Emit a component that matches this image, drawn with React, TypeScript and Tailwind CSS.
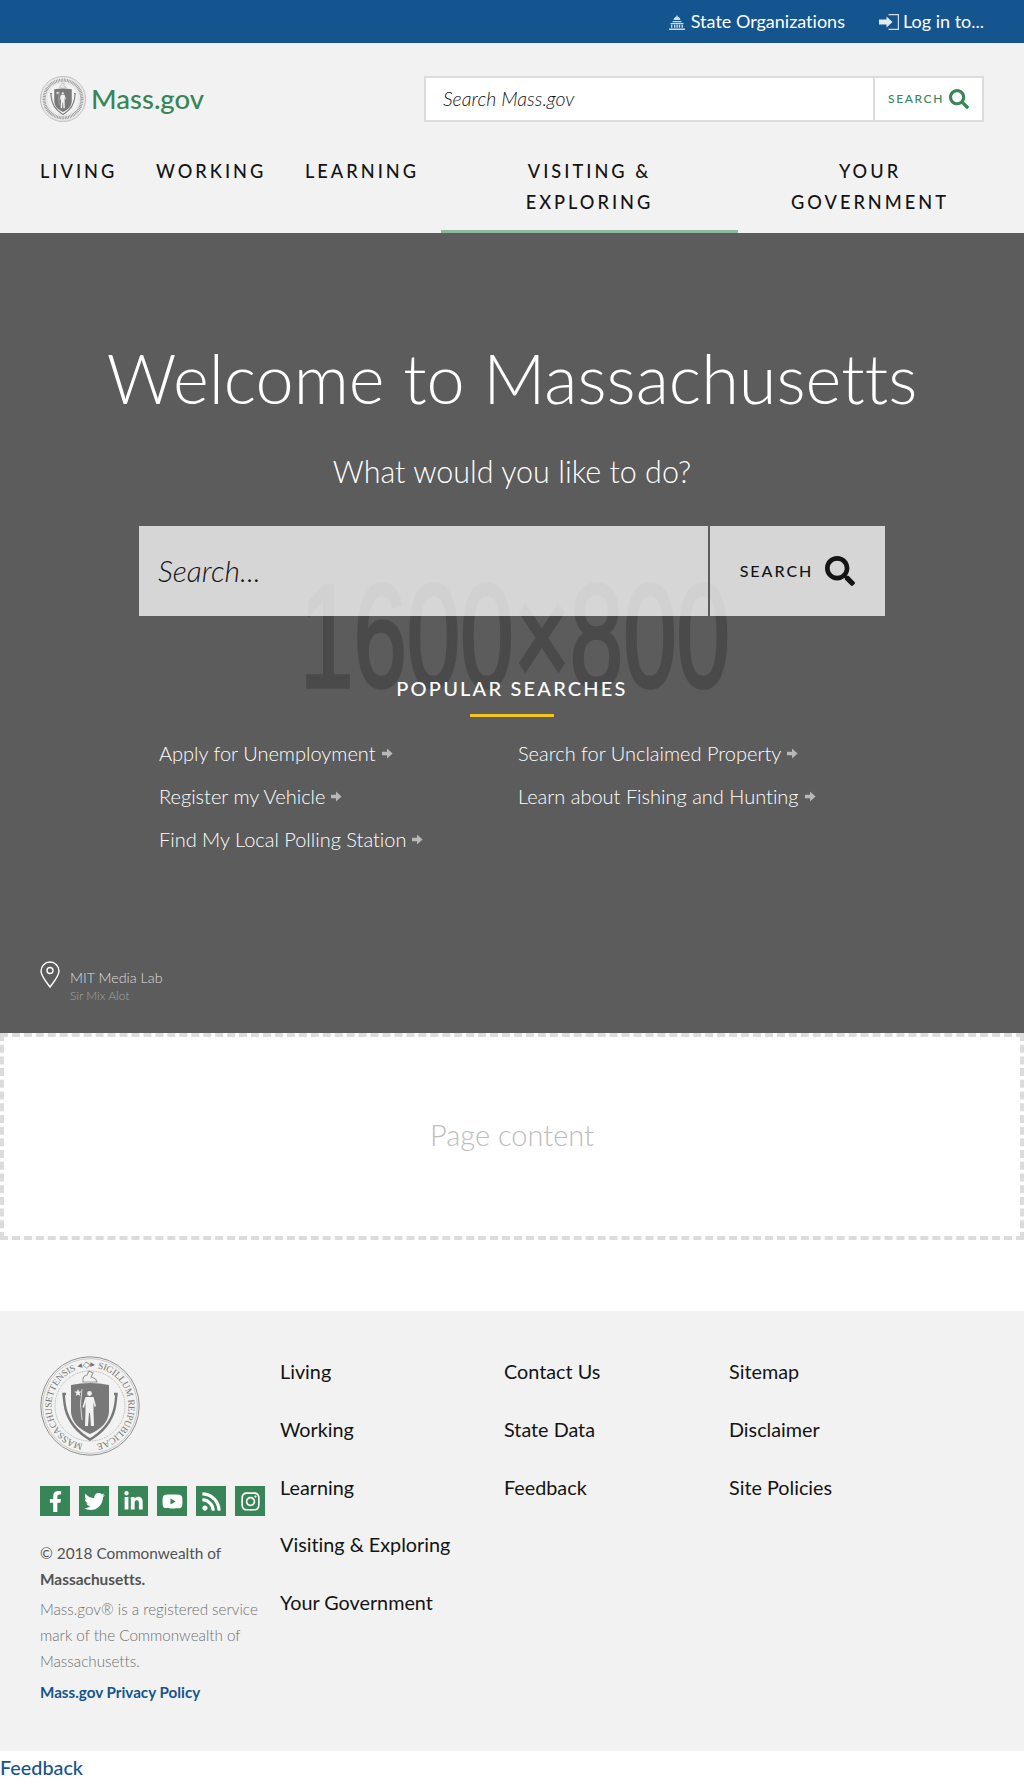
import React from 'react';
import { FaFacebookF, FaTwitter, FaLinkedinIn, FaYoutube, FaRss, FaInstagram, FaSearch } from 'react-icons/fa';

const font = { fontFamily: 'Lato, "Open Sans", sans-serif' };

// state seal, the big one in the footer carries the lettering
const Seal: React.FC<{ size: number; id: string; lettered?: boolean }> = ({ size, id, lettered }) => (
  <svg width={size} height={size} viewBox="0 0 100 100" className="shrink-0">
    <circle cx="50" cy="50" r="49.2" fill="#f2f2f2" stroke="#858585" strokeWidth="0.9" />
    <circle cx="50" cy="50" r="47.4" fill="none" stroke="#a0a0a0" strokeWidth="0.5" />
    <circle cx="50" cy="50" r="35" fill="none" stroke="#a5a5a5" strokeWidth="0.9" strokeDasharray="0.9 0.9" />
    <defs>
      <path id={id} d="M50 88.5 a38.5 38.5 0 1 1 0 -77 a38.5 38.5 0 1 1 0 77" />
    </defs>
    {lettered ? (
      <text fontSize="9.5" fill="#777" fontFamily="Liberation Serif, serif">
        <textPath href={`#${id}`} startOffset="7" textLength="228">MASSACHUSETTENSIS ◂◇▸ SIGILLUM REIPUBLICAE</textPath>
      </text>
    ) : (
      <circle cx="50" cy="50" r="41" fill="none" stroke="#9a9a9a" strokeWidth="7" strokeDasharray="2 1.4" />
    )}
    <path d="M31 29 Q50 25 69 29 V56 Q68 70 50 78 Q32 70 31 56 Z" fill="#787878" />
    <path d="M26 38 H23.5 L24.5 47 Q27 68 46 81 L50 83.5 L54 81 Q73 68 75.5 47 L76.5 38 H74" fill="none" stroke="#787878" strokeWidth="2.4" />
    <circle cx="49.5" cy="37.5" r="2.4" fill="#f2f2f2" />
    <path d="M45.5 41 H53.5 L56 50 L54.5 51 L53.5 46 V55 L54 70 H51 L50 57 H49 L48 70 H45 L45.5 55 V46 L44 52 L42.5 51 Z" fill="#f2f2f2" />
    <path d="M42 33 Q39 48 42 64" fill="none" stroke="#f2f2f2" strokeWidth="0.8" />
    <path d="M38 33 l1 2.6 2.7 0 -2.2 1.7 0.8 2.7 -2.3 -1.6 -2.3 1.6 0.8 -2.7 -2.2 -1.7 2.7 0 z" fill="#f2f2f2" />
    <path d="M43 26 Q42 20 47 19 L49 15 L53 17 L51 21 Q56 22 57 26 Z" fill="none" stroke="#999" strokeWidth="1.1" />
  </svg>
);

const CapitolIcon = () => (
  <svg width="16" height="16" viewBox="0 0 16 16" fill="#cfdbe7" className="mr-[6px] shrink-0">
    <path d="M8 0.5 L8.6 2.4 C10.4 2.9 11.4 4.4 11.5 6 H4.5 C4.6 4.4 5.6 2.9 7.4 2.4 Z" />
    <path d="M3.5 7 H12.5 V8.2 H3.5 Z M1.5 9 H14.5 V10.2 H1.5 Z M0 14.4 H16 V16 H0 Z" />
    <path d="M2 10.8 H3.4 V13.8 H2 Z M5 10.8 H6.4 V13.8 H5 Z M7.4 10.8 H8.8 V13.8 H7.4 Z M9.8 10.8 H11.2 V13.8 H9.8 Z M12.6 10.8 H14 V13.8 H12.6 Z" />
  </svg>
);

const LoginIcon = () => (
  <svg width="20" height="16" viewBox="0 0 20 16" className="ml-[34px] mr-[4px] shrink-0">
    <path d="M9.5 0.6 H19.4 V15.4 H9.5" fill="none" stroke="#cfdbe7" strokeWidth="1.2" />
    <path d="M0 5.6 H7.5 V2.5 L13.5 8 L7.5 13.5 V10.4 H0 Z" fill="#e3eaf1" />
  </svg>
);

const LinkArrow = () => (
  <svg width="11" height="11" viewBox="0 0 11 11" fill="#b8b8b8" className="ml-[6px] mt-[1px] shrink-0">
    <path d="M0 3.8 H5 V0.5 L10.6 5.5 L5 10.5 V7.2 H0 Z" />
  </svg>
);

const popularLeft = ['Apply for Unemployment', 'Register my Vehicle', 'Find My Local Polling Station'];
const popularRight = ['Search for Unclaimed Property', 'Learn about Fishing and Hunting'];

const PopularLink: React.FC<{ label: string }> = ({ label }) => (
  <a className="flex items-center h-[43px] text-[20px] font-light text-white">
    {label}
    <LinkArrow />
  </a>
);

const socials = [FaFacebookF, FaTwitter, FaLinkedinIn, FaYoutube, FaRss, FaInstagram];
const col1 = ['Living', 'Working', 'Learning', 'Visiting & Exploring', 'Your Government'];
const col2 = ['Contact Us', 'State Data', 'Feedback'];
const col3 = ['Sitemap', 'Disclaimer', 'Site Policies'];

const FooterCol: React.FC<{ items: string[]; cls: string }> = ({ items, cls }) => (
  <ul className={cls}>
    {items.map((t) => (
      <li key={t} className="h-[57.75px] text-[19.8px] leading-[30px] text-[#141414]">{t}</li>
    ))}
  </ul>
);

export default function App() {
  return (
    <div style={font} className="w-[1024px] h-[1784px] bg-white overflow-hidden [font-variant-ligatures:none]">
      <div className="h-[43px] bg-[#14558f] flex justify-end items-center pr-[40px] text-[18px] text-white">
        <CapitolIcon />
        <span>State Organizations</span>
        <LoginIcon />
        <span>Log in to...</span>
      </div>

      <header className="h-[190px] bg-[#f2f2f2] relative">
        <div className="flex justify-between px-[40px] pt-[33px]">
          <div className="flex items-center gap-[5px] h-[46px]">
            <Seal size={46} id="seal-sm" />
            <span className="text-[27.5px] font-medium text-[#388557]">Mass.gov</span>
          </div>
          <div className="flex w-[560px] h-[46px] border-2 border-[#dcdcdc] bg-white">
            <div className="flex-1 flex items-center pl-[17px] text-[19.5px] italic font-light text-[#141414]">Search Mass.gov</div>
            <div className="w-[109px] border-l-2 border-[#dcdcdc] flex items-center justify-center gap-[5px] text-[#388557]">
              <span className="text-[12px] font-medium tracking-[1.6px]">SEARCH</span>
              <FaSearch size={20} />
            </div>
          </div>
        </div>
        <nav className="flex px-[40px] pt-[34px] text-[18.2px] leading-[31px] font-medium tracking-[3px] text-[#141414]">
          <div className="w-[116px] shrink-0">LIVING</div>
          <div className="w-[149px] shrink-0">WORKING</div>
          <div className="w-[136px] shrink-0">LEARNING</div>
          <div className="w-[297px] shrink-0 text-center">VISITING &<br />EXPLORING</div>
          <div className="w-[264px] shrink-0 text-center">YOUR<br />GOVERNMENT</div>
        </nav>
        <div className="absolute left-[441px] bottom-0 w-[297px] h-[3px] bg-[#8fb79f]" />
      </header>

      <section className="h-[800px] bg-[#5c5c5c] relative overflow-hidden">
        <svg className="absolute left-[285px] top-[330px]" width="460" height="170" viewBox="0 0 460 170">
          <text x="15" y="124" fontSize="146" fontFamily="Liberation Sans, sans-serif" fill="#4a4a4a" stroke="#4a4a4a" strokeWidth="3.5" textLength="430" lengthAdjust="spacingAndGlyphs">1600×800</text>
        </svg>
        <div className="relative flex flex-col items-center pt-[110px]">
          <h1 className="text-[68.5px] leading-[70px] font-light text-white">Welcome to Massachusetts</h1>
          <p className="mt-[38px] text-[30.5px] leading-[40px] font-light text-white">What would you like to do?</p>
          <div className="mt-[35px] w-[746px] h-[90px] flex bg-white/75">
            <div className="flex-1 flex items-center pl-[19px] pb-[2px] text-[30px] italic font-light text-[#141414]">Search...</div>
            <div className="w-[177px] border-l-2 border-[#5c5c5c] flex items-center justify-center gap-[12px] text-[#141414]">
              <span className="text-[16px] font-medium tracking-[2px]">SEARCH</span>
              <FaSearch size={30} />
            </div>
          </div>
          <h2 className="mt-[59px] text-[20px] leading-[26px] font-medium tracking-[2.2px] text-white">POPULAR SEARCHES</h2>
          <div className="mt-[13px] w-[84px] h-[3px] bg-[#f6c51b]" />
          <div className="mt-[14px] w-[746px] flex pl-[20px]">
            <div className="w-[359px]">{popularLeft.map((t) => <PopularLink key={t} label={t} />)}</div>
            <div>{popularRight.map((t) => <PopularLink key={t} label={t} />)}</div>
          </div>
        </div>
        <div className="absolute left-[40px] bottom-[28px] flex gap-[10px]">
          <svg width="20" height="28" viewBox="0 0 20 28" fill="none" stroke="white" strokeWidth="1.4" className="mb-[10px]">
            <path d="M10 26 C5 19 1 15 1 10 a9 9 0 0 1 18 0 C19 15 15 19 10 26 Z" />
            <circle cx="10" cy="9.5" r="3" />
          </svg>
          <div className="pt-[8px]">
            <div className="text-[14.3px] leading-[18px] font-light text-[#dcdcdc]">MIT Media Lab</div>
            <div className="text-[12px] leading-[18px] font-light text-[#a6a6a6]">Sir Mix Alot</div>
          </div>
        </div>
      </section>

      <div className="h-[207px] border-4 border-dashed border-[#dcdcdc] flex items-center justify-center pb-[4px] text-[29px] font-light text-[#bdbdbd]">
        Page content
      </div>

      <footer className="mt-[71px] h-[440px] bg-[#f2f2f2] flex px-[40px] pt-[45px]">
        <div className="w-[240px]">
          <Seal size={100} id="seal-lg" lettered />
          <div className="mt-[30px] flex gap-[9px]">
            {socials.map((Icon, i) => (
              <div key={i} className="w-[30px] h-[30px] bg-[#388557] flex items-center justify-center text-white">
                <Icon size={21} />
              </div>
            ))}
          </div>
          <p className="mt-[24px] text-[15.4px] leading-[26px] text-[#535353]">© 2018 Commonwealth of <span className="font-bold">Massachusetts.</span></p>
          <p className="mt-[4px] text-[15.2px] leading-[26px] font-light text-[#707070]">Mass.gov® is a registered service mark of the Commonwealth of Massachusetts.</p>
          <p className="mt-[5px] text-[15.2px] leading-[26px] font-bold text-[#14558f]">Mass.gov Privacy Policy</p>
        </div>
        <FooterCol items={col1} cls="w-[224px]" />
        <FooterCol items={col2} cls="w-[225px]" />
        <FooterCol items={col3} cls="" />
      </footer>
      <div className="h-[33px] text-[19.8px] leading-[32px] font-medium text-[#14558f]">Feedback</div>
    </div>
  );
}
